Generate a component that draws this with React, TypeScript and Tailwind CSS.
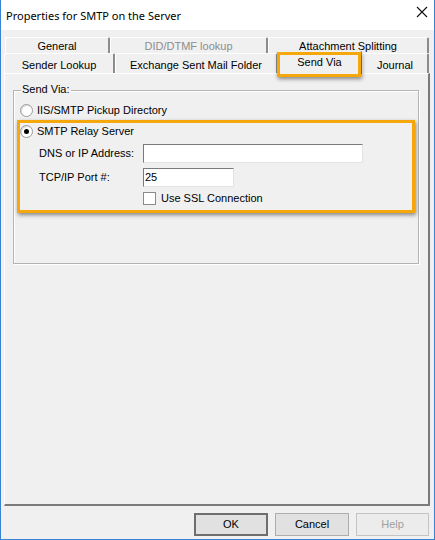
import React from "react";

const font = { fontFamily: '"Liberation Sans", Arial, sans-serif' };

function Tab({ w, label, disabled, pt }: { w: number; label: string; disabled?: boolean; pt: string }) {
  return (
    <div
      className={`h-full flex items-start justify-center border-l border-t border-white border-r-2 border-r-[#8c8c8c] rounded-tl-[2px] rounded-tr-[2px] text-[11px] leading-none bg-[#f0f0f0] ${pt}`}
      style={{ width: w }}
    >
      <span className={disabled ? "text-[#8d8d8d]" : "text-black"}>{label}</span>
    </div>
  );
}

function Radio({ checked }: { checked?: boolean }) {
  return (
    <div className="w-[13px] h-[13px] rounded-full border border-[#9a9a9a] bg-white flex items-center justify-center shadow-[inset_1px_1px_0_#dcdcdc]">
      {checked && <div className="w-[5px] h-[5px] rounded-full bg-black" />}
    </div>
  );
}

export default function App() {
  return (
    <div
      className="w-[435px] h-[540px] bg-[#f0f0f0] border-l border-r border-b border-[#3a82d6] flex flex-col text-black"
      style={font}
    >
      {/* Title bar */}
      <div className="h-[30px] bg-white flex items-center justify-between pl-[5px] pr-[6px] shrink-0">
        <span className="text-[11px] leading-none pt-[1px]" style={{ fontFamily: '"Noto Sans", sans-serif' }}>
          Properties for SMTP on the Server
        </span>
        <svg width="12" height="12" viewBox="0 0 12 12" className="mt-[-6px]">
          <path d="M1 1 L11 11 M11 1 L1 11" stroke="#111" strokeWidth="1.1" />
        </svg>
      </div>

      {/* Body */}
      <div className="flex flex-col pl-[3px] pr-[4px] pt-[7px] flex-1">
        {/* Tab row 1 */}
        <div className="flex h-[16px] pl-[1px]">
          <Tab w={105} label="General" pt="pt-[3px]" />
          <Tab w={158} label="DID/DTMF lookup" disabled pt="pt-[3px]" />
          <Tab w={161} label="Attachment Splitting" pt="pt-[3px]" />
        </div>
        {/* Tab row 2 */}
        <div className="flex h-[20px] relative z-10">
          <Tab w={111} label="Sender Lookup" pt="pt-[6px]" />
          <Tab w={163} label="Exchange Sent Mail Folder" pt="pt-[6px]" />
          <div className="relative w-[84px] h-[23px] mt-[-2px] bg-[#f0f0f0] border-l border-t border-white border-r-2 border-r-[#8c8c8c] flex justify-center pt-[5px] text-[11px] leading-none">
            <span>Send Via</span>
            <div className="absolute left-[-2px] top-[0px] w-[84px] h-[25px] border-[3px] border-[#f5a70c] shadow-[1px_2px_4px_rgba(0,0,0,0.45)]" />
          </div>
          <Tab w={67} label="Journal" pt="pt-[6px]" />
        </div>

        {/* Panel */}
        <div className="h-[433px] border-l border-t border-white border-r-2 border-b-2 border-r-[#7a7a7a] border-b-[#7a7a7a] pl-[8px] pt-[16px]">
          {/* Group box */}
          <div className="relative w-[406px] h-[174px] border border-[#b4b4b4] shadow-[inset_1px_1px_0_#ffffff,1px_1px_0_#ffffff] flex flex-col pl-[6px] pt-[12px] text-[11px] leading-none">
            <span className="absolute left-[7px] top-[-7px] bg-[#f0f0f0] px-[1px]">Send Via:</span>

            <div className="flex items-center h-[14px] gap-[4px]">
              <Radio />
              <span>IIS/SMTP Pickup Directory</span>
            </div>

            <div className="flex items-center h-[14px] gap-[4px] mt-[7px]">
              <Radio checked />
              <span>SMTP Relay Server</span>
            </div>

            <div className="flex items-center h-[19px] mt-[6px] pl-[19px]">
              <span className="w-[104px]">DNS or IP Address:</span>
              <div className="w-[220px] h-[19px] bg-white border border-t-[#7a7a7a] border-l-[#7a7a7a] border-r-[#e3e3e3] border-b-[#e3e3e3]" />
            </div>

            <div className="flex items-center h-[19px] mt-[5px] pl-[19px]">
              <span className="w-[104px]">TCP/IP Port #:</span>
              <div className="w-[91px] h-[19px] bg-white border border-t-[#7a7a7a] border-l-[#7a7a7a] border-r-[#e3e3e3] border-b-[#e3e3e3] flex items-center pl-[1px]">
                25
              </div>
            </div>

            <div className="flex items-center h-[13px] mt-[5px] pl-[123px] gap-[5px]">
              <div className="w-[13px] h-[13px] bg-white border border-[#8a8a8a]" />
              <span>Use SSL Connection</span>
            </div>

            {/* Annotation highlight */}
            <div className="absolute left-[3px] top-[29px] w-[398px] h-[93px] border-[3px] border-[#f5a70c] shadow-[1px_2px_4px_rgba(0,0,0,0.45)] pointer-events-none" />
          </div>
        </div>

        {/* Buttons */}
        <div className="flex justify-end gap-[7px] mt-[7px] pr-[1px] text-[11px] leading-none">
          <div className="w-[74px] h-[23px] border-2 border-[#6e6e6e] bg-[#e1e1e1] flex items-center justify-center">OK</div>
          <div className="w-[74px] h-[23px] border border-[#adadad] bg-[#e1e1e1] flex items-center justify-center">Cancel</div>
          <div className="w-[73px] h-[23px] border border-[#c4c4c4] bg-[#ececec] flex items-center justify-center text-[#a0a0a0]">Help</div>
        </div>
      </div>
    </div>
  );
}
